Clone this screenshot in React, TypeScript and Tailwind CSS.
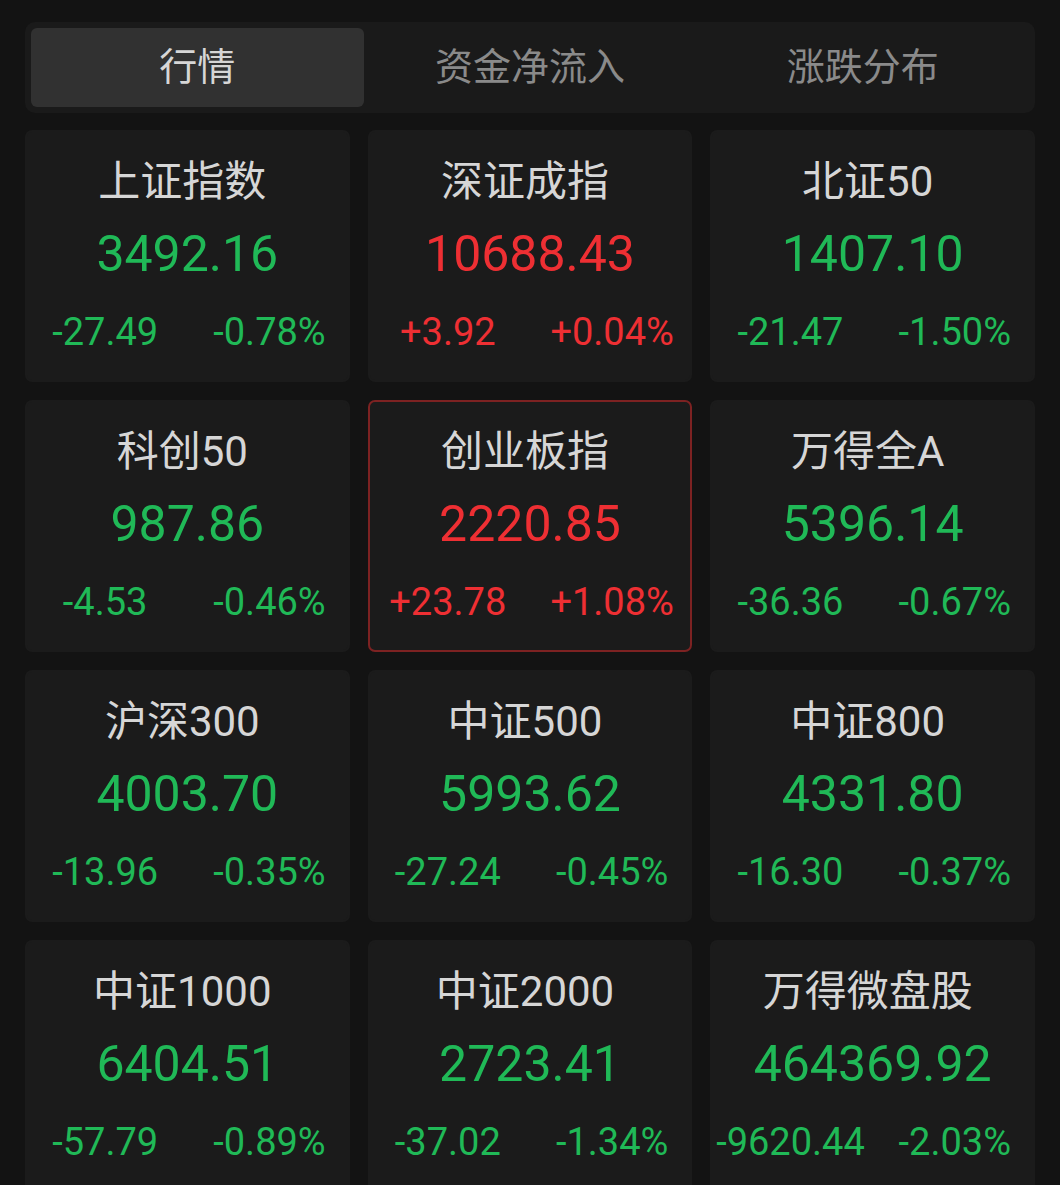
import React from "react";

type Item = { name: string; value: string; chg: string; pct: string; up: boolean; active?: boolean };

const items: Item[] = [
  { name: "上证指数", value: "3492.16", chg: "-27.49", pct: "-0.78%", up: false },
  { name: "深证成指", value: "10688.43", chg: "+3.92", pct: "+0.04%", up: true },
  { name: "北证50", value: "1407.10", chg: "-21.47", pct: "-1.50%", up: false },
  { name: "科创50", value: "987.86", chg: "-4.53", pct: "-0.46%", up: false },
  { name: "创业板指", value: "2220.85", chg: "+23.78", pct: "+1.08%", up: true, active: true },
  { name: "万得全A", value: "5396.14", chg: "-36.36", pct: "-0.67%", up: false },
  { name: "沪深300", value: "4003.70", chg: "-13.96", pct: "-0.35%", up: false },
  { name: "中证500", value: "5993.62", chg: "-27.24", pct: "-0.45%", up: false },
  { name: "中证800", value: "4331.80", chg: "-16.30", pct: "-0.37%", up: false },
  { name: "中证1000", value: "6404.51", chg: "-57.79", pct: "-0.89%", up: false },
  { name: "中证2000", value: "2723.41", chg: "-37.02", pct: "-1.34%", up: false },
  { name: "万得微盘股", value: "464369.92", chg: "-9620.44", pct: "-2.03%", up: false },
];

const font = { fontFamily: 'Roboto, "Noto Sans CJK SC", sans-serif' };

function Card({ it }: { it: Item }) {
  const color = it.up ? "text-[#ee2f33]" : "text-[#20b957]";
  return (
    <div
      className={
        "h-[252px] rounded-[7px] bg-[#1b1b1b] flex flex-col items-center " +
        (it.active ? "border-2 border-[#7d2222]" : "border-2 border-[#1b1b1b]")
      }
    >
      <div className="mt-[24px] pr-[10px] h-[52px] leading-[52px] text-[42px] text-[#d6d6d6]">{it.name}</div>
      <div className={"mt-[16px] h-[60px] leading-[60px] text-[50px] " + color}>{it.value}</div>
      <div className={"mt-[25px] w-full grid grid-cols-2 h-[46px] leading-[46px] text-[38px] " + color}>
        <div className="text-center pr-[4px]">{it.chg}</div>
        <div className="text-center pl-[4px]">{it.pct}</div>
      </div>
    </div>
  );
}

export default function App() {
  const tabs = ["行情", "资金净流入", "涨跌分布"];
  return (
    <div className="w-[1060px] h-[1185px] overflow-hidden bg-[#131313] px-[25px] pt-[22px]" style={font}>
      <div className="h-[91px] rounded-[10px] bg-[#1a1a1a] p-[6px] grid grid-cols-3 gap-0">
        {tabs.map((t, i) => (
          <div
            key={t}
            className={
              "rounded-[6px] flex items-center justify-center text-[38px] " +
              (i === 0 ? "bg-[#313131] text-[#d6d6d6]" : "text-[#8a8a8a]")
            }
          >
            {t}
          </div>
        ))}
      </div>
      <div className="mt-[17px] grid grid-cols-3 gap-x-[18px] gap-y-[18px]">
        {items.map((it) => (
          <Card key={it.name} it={it} />
        ))}
      </div>
    </div>
  );
}
